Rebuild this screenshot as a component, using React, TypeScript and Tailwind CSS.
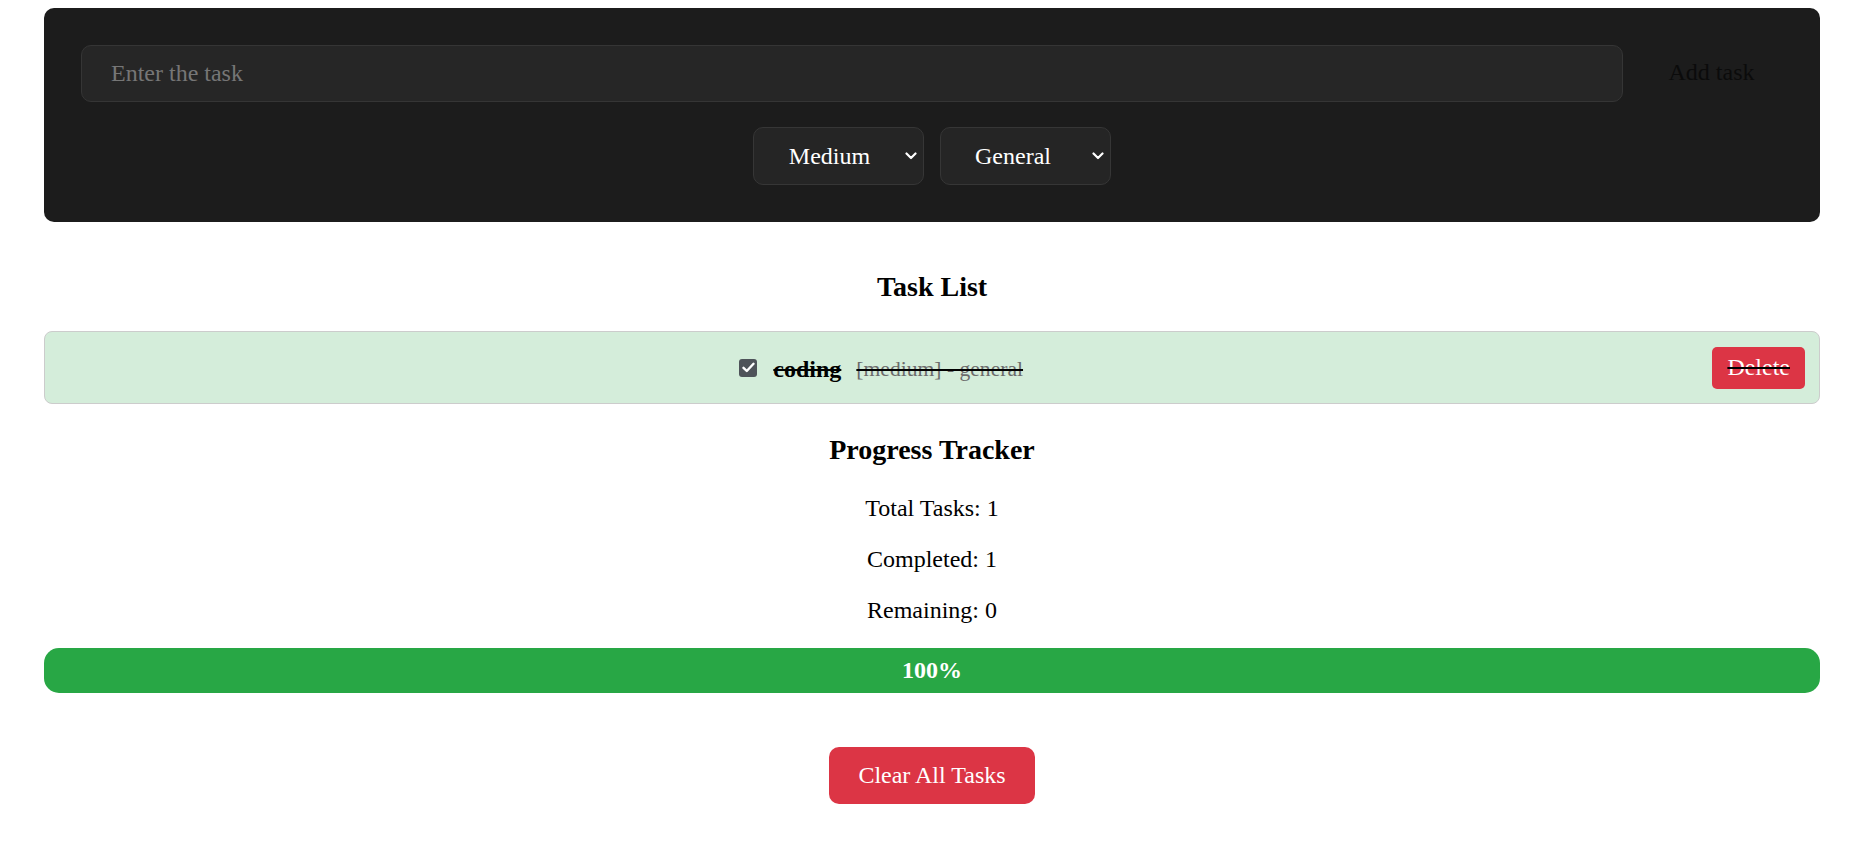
import React from "react";

function Chevron() {
  return (
    <svg width="12" height="8" viewBox="0 0 12 8" fill="none" className="shrink-0 ml-auto">
      <path d="M1.5 1.5 L6 6 L10.5 1.5" stroke="#ffffff" strokeWidth="2.2" strokeLinecap="round" strokeLinejoin="round" />
    </svg>
  );
}

function FakeSelect({ label, wide }: { label: string; wide: boolean }) {
  return (
    <div className="flex items-center w-[171px] h-[58px] rounded-[10px] border border-[#363636] bg-[#252525] text-white text-[24px] leading-[27px] pr-[6px]">
      <span className={wide ? "w-[151px] text-center" : "w-[144px] text-center"}>{label}</span>
      <Chevron />
    </div>
  );
}

export default function App() {
  return (
    <div className="min-h-screen bg-white font-['Liberation_Serif',serif] text-black">
      <div className="ml-[44px] w-[1776px] pt-[8px] pb-[40px]">
        {/* Input panel */}
        <div className="bg-[#1c1c1c] rounded-[10px] px-[37px] pt-[37px] pb-[37px]">
          <div className="flex items-center">
            <input
              placeholder="Enter the task"
              className="flex-1 h-[57px] rounded-[10px] border border-[#353535] bg-[#262626] pl-[29px] text-[24px] text-white placeholder:text-[#767676] outline-none font-['Liberation_Serif',serif]"
            />
            <button className="ml-[17px] w-[143px] h-[57px] pb-[2px] text-[24px] leading-[27px] text-[#0b0b0b] bg-transparent font-['Liberation_Serif',serif]">
              Add task
            </button>
          </div>
          <div className="flex justify-center gap-[16px] mt-[25px]">
            <FakeSelect label="Medium" wide={true} />
            <FakeSelect label="General" wide={false} />
          </div>
        </div>

        <h3 className="mt-[49px] text-center text-[28px] leading-[31px] font-bold">Task List</h3>

        <ul className="mt-[29px]">
          <li className="flex items-center h-[73px] border border-[#cccccc] rounded-[8px] bg-[#d4edda] px-[14px]">
            <div className="flex-1 flex items-center justify-center">
              <span className="w-[18px] h-[18px] rounded-[3px] bg-[#4e5359] flex items-center justify-center">
                <svg width="13" height="11" viewBox="0 0 13 11" fill="none">
                  <path d="M1.5 5.8 L4.8 9 L11.5 1.8" stroke="#ffffff" strokeWidth="2.4" strokeLinecap="round" strokeLinejoin="round" />
                </svg>
              </span>
              <span className="ml-[16px] pt-[4px] text-[24px] leading-[27px] font-bold line-through decoration-black">coding</span>
              <span className="ml-[15px] pt-[4px] text-[21.6px] leading-[27px] text-[#6b6b6b] line-through decoration-black">
                [medium] - general
              </span>
            </div>
            <button className="ml-[9px] h-[42px] px-[15px] rounded-[5px] bg-[#dc3545] text-white text-[24px] leading-[27px] line-through decoration-black font-['Liberation_Serif',serif]">
              Delete
            </button>
          </li>
        </ul>

        <h3 className="mt-[30px] text-center text-[28px] leading-[31px] font-bold">Progress Tracker</h3>
        <p className="mt-[30px] text-center text-[24px] leading-[27px]">Total Tasks: 1</p>
        <p className="mt-[24px] text-center text-[24px] leading-[27px]">Completed: 1</p>
        <p className="mt-[24px] text-center text-[24px] leading-[27px]">Remaining: 0</p>

        <div className="mt-[24px] h-[45px] rounded-[15px] bg-[#28a745] flex items-center justify-center text-white text-[24px] font-bold leading-[27px]">
          100%
        </div>

        <div className="flex justify-center mt-[54px]">
          <button className="h-[57px] w-[206px] rounded-[10px] bg-[#dc3545] text-white text-[24px] leading-[27px] font-['Liberation_Serif',serif]">
            Clear All Tasks
          </button>
        </div>
      </div>
    </div>
  );
}
